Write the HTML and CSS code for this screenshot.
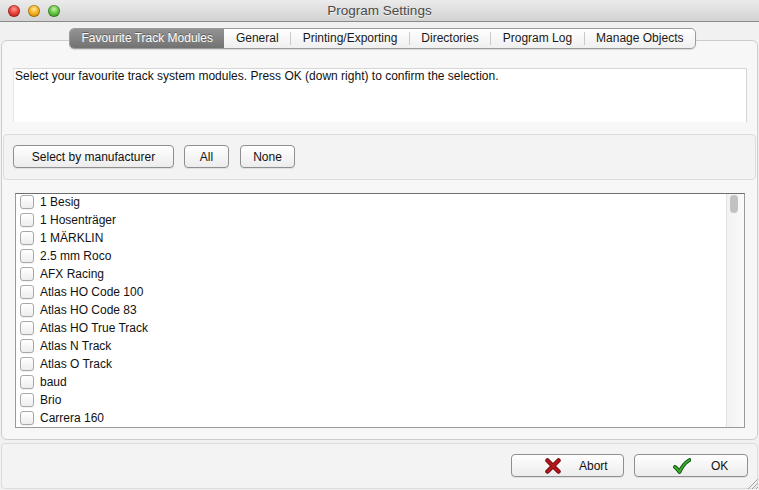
FILE: index.html
```html
<!DOCTYPE html>
<html>
<head>
    <meta charset="utf-8">
    <title>Program Settings</title>
    <link rel="stylesheet" href="styles.css">
</head>
<body>
<div class="window">
    <div class="titlebar">
        <div class="lights">
            <span class="light red"></span>
            <span class="light yellow"></span>
            <span class="light green"></span>
        </div>
        <div class="title">Program Settings</div>
    </div>
    <div class="window-body">
        <div class="tab-panel">
            <div class="tabs">
                <div class="tab selected">Favourite Track Modules</div>
                <div class="tab">General</div>
                <span class="sep"></span>
                <div class="tab">Printing/Exporting</div>
                <span class="sep"></span>
                <div class="tab">Directories</div>
                <span class="sep"></span>
                <div class="tab">Program Log</div>
                <span class="sep"></span>
                <div class="tab">Manage Objects</div>
            </div>
            <div class="info-box">Select your favourite track system modules. Press OK (down right) to confirm the selection.</div>
            <div class="button-bar">
                <button class="btn btn-wide">Select by manufacturer</button>
                <button class="btn btn-all">All</button>
                <button class="btn btn-none">None</button>
            </div>
            <div class="module-list">
                <div class="rows" id="rows"></div>
                <div class="scrollbar"><div class="thumb"></div></div>
            </div>
        </div>
        <div class="footer">
            <button class="btn btn-footer">
                <svg width="16" height="16" viewBox="0 0 16 16">
                    <path d="M2.5 2.5 L13.5 13.5 M13.5 2.5 L2.5 13.5" stroke="#6e0a0a" stroke-width="4.5" stroke-linecap="round"/>
                    <path d="M2.5 2.5 L13.5 13.5 M13.5 2.5 L2.5 13.5" stroke="#b3161b" stroke-width="2.6" stroke-linecap="round"/>
                </svg>
                <span>Abort</span>
            </button>
            <button class="btn btn-footer btn-ok">
                <svg width="18" height="16" viewBox="0 0 18 16">
                    <path d="M2 9 Q4 10 6.5 14 Q10 6 16.5 2" fill="none" stroke="#0d4a0d" stroke-width="3.8" stroke-linecap="round" stroke-linejoin="round"/>
                    <path d="M2 9 Q4 10 6.5 14 Q10 6 16.5 2" fill="none" stroke="#3aae2e" stroke-width="2" stroke-linecap="round" stroke-linejoin="round"/>
                </svg>
                <span>OK</span>
            </button>
        </div>
        <div class="grip">
            <svg width="12" height="12" viewBox="0 0 12 12">
                <path d="M2 12 L12 2 M6 12 L12 6 M10 12 L12 10" stroke="#a0a0a0" stroke-width="1"/>
            </svg>
        </div>
    </div>
</div>
<script>
    const modules = ['1 Besig', '1 Hosenträger', '1 MÄRKLIN', '2.5 mm Roco', 'AFX Racing',
        'Atlas HO Code 100', 'Atlas HO Code 83', 'Atlas HO True Track', 'Atlas N Track',
        'Atlas O Track', 'baud', 'Brio', 'Carrera 160'];
    const rows = document.getElementById('rows');
    modules.forEach(function(name) {
        const row = document.createElement('div');
        row.className = 'row';
        row.innerHTML = '<span class="check"></span><span class="label"></span>';
        row.querySelector('.label').textContent = name;
        rows.appendChild(row);
    });
</script>
</body>
</html>
```

FILE: styles.css
```css
body {
    margin: 0;
    font-family: "Liberation Sans", Arial, sans-serif;
    font-size: 12px;
    color: #111;
    background: #ececec;
}
.window {
    width: 759px;
    height: 490px;
    display: flex;
    flex-direction: column;
    background: #ededed;
    overflow: hidden;
}
.titlebar {
    height: 21px;
    border-bottom: 1px solid #8a8a8a;
    background: linear-gradient(#ebebeb, #d3d3d3);
    display: flex;
    align-items: center;
}
.lights {
    display: flex;
    gap: 8px;
    padding-left: 8px;
    margin-top: 1px;
}
.light {
    width: 12px;
    height: 12px;
    border-radius: 50%;
    box-shadow: inset 0 0 0 1px rgba(0, 0, 0, 0.25);
}
.light.red {
    background: radial-gradient(circle at 50% 35%, #ff9a94 0%, #e8433b 45%, #b3150f 100%);
}
.light.yellow {
    background: radial-gradient(circle at 50% 35%, #ffe79a 0%, #f4b020 45%, #b87a06 100%);
}
.light.green {
    background: radial-gradient(circle at 50% 35%, #c8f2a8 0%, #62c240 45%, #2f8a1a 100%);
}
.title {
    flex: 1;
    text-align: center;
    margin-left: -60px;
    font-size: 13.5px;
    color: #4a4a4a;
    text-shadow: 0 1px 0 rgba(255, 255, 255, 0.6);
}
.window-body {
    flex: 1;
    padding-top: 18px;
    display: flex;
    flex-direction: column;
    background: #f1f1f1;
    position: relative;
}
.tab-panel {
    margin: 0 1px;
    height: 398px;
    border: 1px solid #cdcdcd;
    border-radius: 6px;
    background: #f7f7f7;
    display: flex;
    flex-direction: column;
}
.tabs {
    align-self: center;
    margin-top: -13px;
    margin-left: 6px;
    height: 19px;
    display: flex;
    align-items: center;
    border: 1px solid #9c9c9c;
    border-radius: 5px;
    background: linear-gradient(#ffffff, #efefef);
    box-shadow: 0 1px 1px rgba(0, 0, 0, 0.12);
}
.tab {
    height: 19px;
    line-height: 19px;
    padding: 0 11.5px;
    color: #1a1a1a;
}
.tab.selected {
    color: #fff;
    background: linear-gradient(#939393, #727272);
    border-radius: 4px 0 0 4px;
    text-shadow: 0 -1px 0 rgba(0, 0, 0, 0.35);
    padding: 0 11.5px;
}
.sep {
    width: 1px;
    height: 13px;
    background: #c9c9c9;
}
.info-box {
    margin: 19px 10px 0 11px;
    height: 53px;
    padding: 0 0 0 1px;
    border: 1px solid #d6d6d6;
    border-bottom: none;
    border-left-color: #e6e6e6;
    background: #fff;
}
.button-bar {
    margin: 12px 1px 0 1px;
    height: 34px;
    padding-top: 10px;
    padding-left: 9px;
    border: 1px solid #dcdcdc;
    border-radius: 4px;
    background: #f3f3f3;
    display: flex;
    gap: 10px;
}
.btn {
    height: 23px;
    border: 1px solid #8f8f8f;
    border-radius: 4px;
    background: linear-gradient(#ffffff, #ececec);
    font-family: "Liberation Sans", Arial, sans-serif;
    font-size: 12px;
    color: #111;
    padding: 0;
    box-shadow: 0 1px 0 rgba(0, 0, 0, 0.08);
}
.btn-wide {
    width: 161px;
}
.btn-all {
    width: 45px;
}
.btn-none {
    width: 55px;
    margin-left: 1px;
}
.module-list {
    margin: 13px 12px 0 13px;
    height: 233px;
    border: 1px solid #9a9a9a;
    border-top-color: #6e6e6e;
    background: #fff;
    display: flex;
    overflow: hidden;
}
.rows {
    flex: 1;
    margin-top: -1px;
    padding-left: 4px;
    overflow: hidden;
}
.row {
    height: 18px;
    display: flex;
    align-items: center;
}
.check {
    width: 12px;
    height: 12px;
    border: 1px solid #a8a8a8;
    border-radius: 3px;
    background: linear-gradient(#ffffff, #ededed);
    box-shadow: 0 1px 0 rgba(0, 0, 0, 0.05);
}
.label {
    margin-left: 6px;
}
.scrollbar {
    width: 14px;
    border-left: 1px solid #e2e2e2;
    background: linear-gradient(to right, #f2f2f2, #fafafa);
    padding: 1px 0 0 3px;
}
.thumb {
    width: 8px;
    height: 18px;
    border-radius: 4px;
    background: #c2c2c2;
}
.footer {
    margin: 3px 1px 0 1px;
    height: 34px;
    padding-top: 10px;
    padding-right: 9px;
    border: 1px solid #dcdcdc;
    border-radius: 4px;
    background: #f3f3f3;
    display: flex;
    justify-content: flex-end;
    gap: 10px;
}
.btn-footer {
    width: 113px;
    display: flex;
    align-items: center;
    padding-left: 33px;
    gap: 18px;
}
.btn-ok {
    width: 114px;
    padding-left: 38px;
    gap: 20px;
}
.grip {
    position: absolute;
    right: 1px;
    bottom: 1px;
    line-height: 0;
}
```
